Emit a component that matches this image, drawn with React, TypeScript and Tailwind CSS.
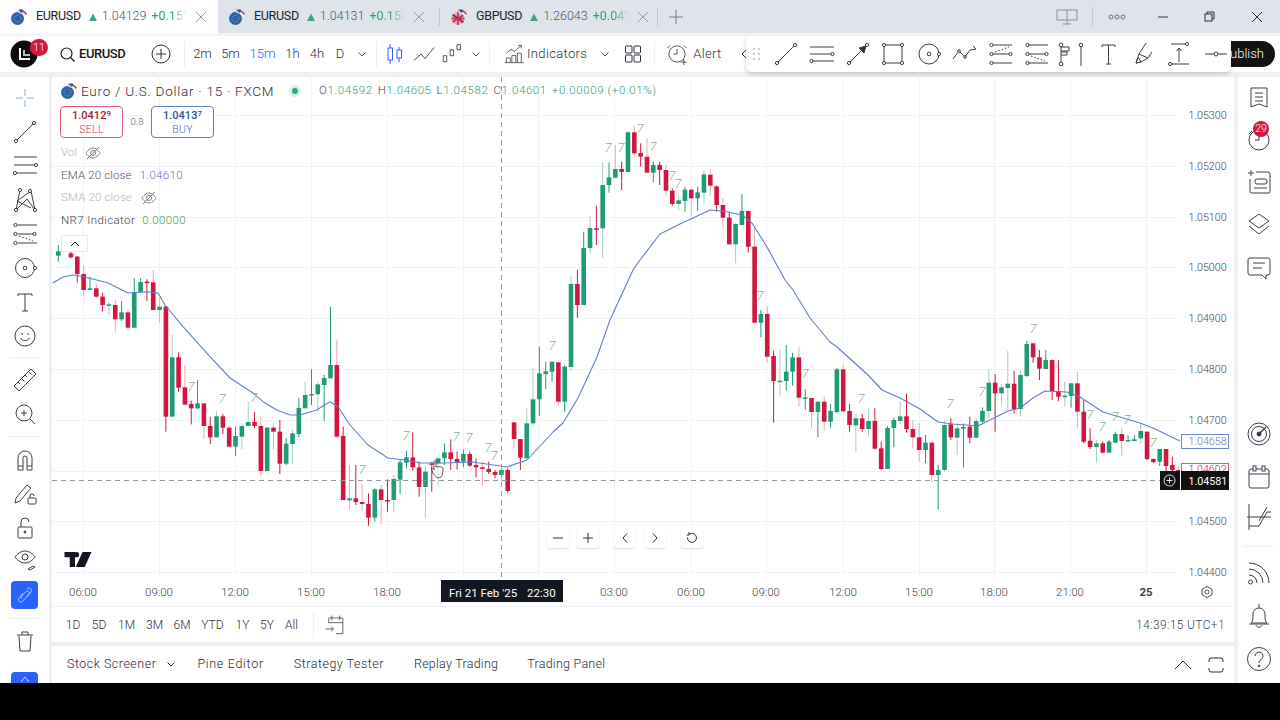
import React from "react";

type C = [number, number, number, number, number, number?] | null;
const G = 1, R = 0;
const zoneA: C[] = [
[G,15,34,47,65],null,[R,30,40,52,55],[R,48,50,102,128],[R,77,102,150,170,1],[G,110,145,150,150],[R,130,145,170,175,1],[R,158,170,195,215],[G,186,193,196,225,1],[R,180,195,238,275,1],
[G,183,217,238,243],[R,210,217,263,270,1],[G,115,156,263,263],[G,115,126,156,160],[R,118,125,128,183],[R,90,127,210,212,1],[G,175,200,210,248,1],[R,198,200,530,575],[G,285,352,530,530,1],[R,337,352,443,455],
[R,375,442,494,496,1],[R,482,492,505,553],[G,420,490,505,508],[R,490,490,558,597,1],[R,530,558,592,612],[G,513,529,592,592,1],[R,522,529,563,582],[R,556,563,620,624,1],[G,560,588,620,648],[G,550,558,590,627,1],
[G,485,546,558,558,1],[R,516,546,558,565],[R,530,558,693,707,1],[G,562,563,693,693],[R,550,563,575,627,1],[R,540,575,671,702],[G,595,611,671,675],[G,570,580,612,673,1],[G,473,504,582,592],[G,425,465,505,505,1],
[G,388,462,466,495],[G,425,433,463,515,1],[G,405,414,435,543],[G,200,375,415,415],[R,298,375,590,595,1],
];
const zoneB: C[] = [
[R,920,948,1140,1140],[G,1035,1135,1141,1168,1],[R,1035,1135,1146,1155],[R,1092,1146,1152,1172,1],[R,1120,1152,1193,1217],[G,1105,1108,1193,1205],[R,1095,1108,1140,1213,1],[R,1078,1140,1141,1175],[G,1065,1077,1140,1178,1],[G,1020,1027,1079,1122],
[G,992,1012,1028,1045],[R,937,1012,1042,1052],[R,1025,1042,1101,1130],[G,1040,1055,1101,1195,1],[R,1025,1030,1032,1115],[G,1012,1015,1030,1100,1],[G,970,997,1015,1035],[R,958,997,1017,1050],[R,995,1017,1027,1048],[G,988,1002,1025,1042],
[R,995,1002,1037,1040],[R,1015,1035,1042,1072],[R,1025,1042,1047,1097,1],[R,1025,1047,1056,1062],[R,1050,1056,1065,1075],[G,1045,1050,1065,1085,1],[R,1045,1050,1113,1118],[R,907,907,957,985,1],[R,957,957,1013,1050],[G,865,910,1015,1020,1],
[G,745,838,910,915,1],[G,680,760,838,888],[G,725,754,762,808],[G,725,725,755,785],[R,727,727,845,857,1],[G,735,740,845,875],[G,468,492,741,753,1],[R,450,492,555,593],[G,335,384,555,555],[G,288,324,384,402,1],
[R,257,325,327,375],[G,128,195,325,412,1],[G,127,172,195,218],[G,75,147,173,175,1],[R,125,147,156,210],[G,35,37,156,156],[R,17,37,100,110,1],[R,70,99,110,140],[R,55,110,158,160,1],[G,125,135,158,187],[R,125,135,150,195],
];
const zoneC: C[] = [
[R,133,150,212,230,1],[R,205,212,252,257],[G,225,241,252,270,1],[G,202,209,243,275],[R,208,209,235,290,1],[G,200,217,235,272],[G,150,163,218,252,1],[R,148,164,197,225,1],[R,197,199,255,275],[R,235,255,293,323,1],
[R,275,293,373,373],[G,310,312,373,430,1],[G,222,273,315,315],[R,272,273,380,398],[R,320,380,608,610,1],[G,570,582,608,652],[R,560,582,710,727,1],[R,692,708,783,908],[G,690,782,785,827,1],[G,675,755,783,812],
[G,698,712,755,797],[R,682,712,833,860,1],[G,808,832,835,870],[R,833,834,876,922,1],[G,845,845,876,952],[R,830,845,905,930,1],[G,852,873,905,923],[G,745,748,876,880],[R,735,748,874,878,1],[R,852,873,915,935],
[G,880,895,916,998,1],[R,882,895,927,935],[G,865,903,927,947,1],[R,865,903,986,988],[R,965,985,1047,1050],[G,918,924,1047,1047],[G,893,900,924,982],[G,845,889,903,912,1],[R,820,889,927,938],[R,900,927,952,985,1],[R,910,952,990,1025,1],
];
const zoneD: C[] = [
[G,405,428,450,490],[R,423,428,525,545,1],[G,495,510,525,628],[G,362,375,510,515,1],[R,355,373,412,420],[G,370,385,413,465,1],[G,370,381,386,503],[R,350,380,413,430],[G,355,363,413,415,1],[G,322,333,365,370],
[G,208,248,333,355,1],[R,222,248,280,395],[G,252,262,280,315,1],[G,152,251,264,330,1],[R,213,251,328,340],[G,210,225,327,350,1],[G,122,132,228,230],[R,130,130,172,188],[R,150,172,206,240],[G,150,180,207,207],
[R,178,180,273,300],[R,180,273,290,303],[G,245,287,290,320,1],[G,250,250,288,323],[R,215,250,335,385,1],[R,300,335,425,430],[R,385,422,441,447],[G,420,430,441,488,1],[R,425,430,458,460],[G,420,425,458,458],
[G,395,402,428,428],[R,383,402,423,470,1],[G,405,420,423,423],[G,405,418,423,423],[G,370,393,415,430,1],[R,395,395,477,480],[R,475,477,486,490],[G,447,447,485,498],[R,447,447,498,515],[R,470,495,510,520],[R,498,510,520,525,1],
];
const candles: { x: number; c: number; wt: number; bt: number; bb: number; wb: number; pale: boolean }[] = [];
let slot = 0;
([[zoneA, 240], [zoneB, 120], [zoneC, 120], [zoneD, 300]] as [C[], number][]).forEach(([z, y0]) => {
  z.forEach((d) => {
    const i = slot++;
    if (!d) return;
    candles.push({ x: 58.3 + i * 6.33, c: d[0], wt: y0 + d[1] / 3, bt: y0 + d[2] / 3, bb: y0 + d[3] / 3, wb: y0 + d[4] / 3, pale: !!d[5] });
  });
});

const ema = "52.7,283 63,277 73,275 83,276.7 96.7,280 108,283 128,293 146.7,291.7 158,293 165,305 183,326.7 210,356.7 230,378 253,393 263,401.7 276.7,410 290,415 300,415 316.7,410 330,401.7 338,406.7 350,425 368,445 388,458 405,460 420,463 443,463 473,462 507,467 527,460 553,432 563,423 578,398 597,357 610,320 633,270 640,260 660,234 680,224 693,218 710,210 723,211 742,215 752,223 767,247 785,280 793,290 810,318 830,342 837,347 868,375 882,390 900,398 920,409 938,422 953,424 978,426 1008,411 1020,408 1033,398 1045,391 1067,392 1080,397 1103,412 1140,423 1153,428 1180,441";
const sevens = [[191,386],[222,398],[254,397],[362,469],[406,435],[456,436],[469,437],[488,447],[494,455],[552,345],[608,147],[621,147],[640,128],[653,146],[672,175],[678,183],[760,295],[805,373],[861,398],[950,403],[982,391],[1033,328],[1090,414],[1102,426],[1115,416],[1127,419],[1153,442]];
const vgrid = [83,159,235,311,387,463,538,614,691,766,843,919,994,1070,1146];
const hgrid: [number, string][] = [[115,"1.05300"],[166,"1.05200"],[217,"1.05100"],[267,"1.05000"],[318,"1.04900"],[369,"1.04800"],[420,"1.04700"],[521,"1.04500"],[572,"1.04400"]];
const times: [number, string][] = [[83,"06:00"],[159,"09:00"],[235,"12:00"],[311,"15:00"],[387,"18:00"],[614,"03:00"],[691,"06:00"],[766,"09:00"],[843,"12:00"],[919,"15:00"],[994,"18:00"],[1070,"21:00"]];

function Ic({ s = 28, className = "", children }: { s?: number; className?: string; children: React.ReactNode }) {
  return <svg width={s} height={s} viewBox="0 0 28 28" fill="none" stroke="#3a3e48" strokeWidth="1" className={className}>{children}</svg>;
}
const Nd = ({ x, y, r = 1.6 }: { x: number; y: number; r?: number }) => <circle cx={x} cy={y} r={r} fill="#fff" />;

function Flag({ gb }: { gb?: boolean }) {
  return (
    <svg width="18" height="18" viewBox="0 0 18 18" className="shrink-0">
      {gb ? (
        <>
          <circle cx="8" cy="10.5" r="6.5" fill="#e3a9ae" />
          <path d="M2.5 7l11 7M13.5 7l-11 7M8 4v13M1.5 10.5h13" stroke="#c8324a" strokeWidth="1.6" />
          <path d="M3 6.5l4 3M13 14.5l-4-3" stroke="#33478f" strokeWidth="1.4" />
        </>
      ) : (
        <>
          <circle cx="7.5" cy="10.5" r="6.5" fill="#2f61a8" />
          <circle cx="7.5" cy="10.5" r="3.4" fill="none" stroke="#7ea3d8" strokeWidth="1" strokeDasharray="1 1" />
        </>
      )}
      <path d="M8 3.5a7 7 0 0 1 7 3.5l2-1A9 9 0 0 0 9 1.5z" fill="#d1394f" />
      <path d="M9 5a6 6 0 0 1 5 3l2-.6A7.5 7.5 0 0 0 8 3.3z" fill="#f3f3f3" />
      <circle cx="11.5" cy="3" r="1.8" fill="#3b5aa5" />
    </svg>
  );
}

function Tab({ sym, price, chg, active, gb, w }: { sym: string; price: string; chg: string; active?: boolean; gb?: boolean; w: string }) {
  return (
    <div className={`flex items-center h-full pl-[10px] ${w} ${active ? "bg-white" : ""}`}>
      <Flag gb={gb} />
      <span className="ml-[8px] text-[12.5px] text-[#1e222d] tracking-[-0.3px]">{sym}</span>
      <svg width="8" height="8" viewBox="0 0 8 8" className="ml-[8px]"><path d="M4 0.5L8 8H0z" fill="#3aa586" /></svg>
      <span className="ml-[5px] text-[12.5px] text-[#50535e] font-light">{price}</span>
      <span className="ml-[5px] w-[36px] overflow-hidden whitespace-nowrap text-[12.5px] text-[#26a17b] [mask-image:linear-gradient(90deg,#000_55%,transparent)]">{chg}</span>
      <svg width="12" height="12" viewBox="0 0 12 12" className="ml-[8px]" stroke="#9598a1" strokeWidth="1"><path d="M1 1l10 10M11 1L1 11" /></svg>
    </div>
  );
}

const V = () => <div className="w-px h-[26px] bg-[#eceef2] shrink-0" />;
const Chev = ({ c = "#50535e", className = "" }: { c?: string; className?: string }) => (
  <svg width="8" height="5" viewBox="0 0 8 5" fill="none" stroke={c} strokeWidth="1" className={className}><path d="M0.5 0.5L4 4l3.5-3.5" /></svg>
);

const TF = ({ t, w, blue }: { t: string; w: string; blue?: boolean }) => (
  <span className={`${w} text-center text-[13px] font-light ${blue ? "text-[#2962ff]" : "text-[#2a2e39]"}`}>{t}</span>
);

function DrawBar() {
  return (
    <div className="absolute left-[746px] top-[36px] w-[485px] h-[36px] bg-white rounded-b-md shadow-[0_2px_4px_rgba(0,0,0,0.18)] flex items-center">
      <svg width="10" height="14" viewBox="0 0 10 14" fill="#c8cad0" className="ml-[6px]">
        <rect x="1" y="1" width="2" height="2" /><rect x="6" y="1" width="2" height="2" /><rect x="1" y="6" width="2" height="2" /><rect x="6" y="6" width="2" height="2" /><rect x="1" y="11" width="2" height="2" /><rect x="6" y="11" width="2" height="2" />
      </svg>
      <div className="ml-[10px] flex items-center gap-[7.8px]">
        <Ic><path d="M6 22L22 6" /><Nd x={5} y={23} /><Nd x={23} y={5} /></Ic>
        <Ic><path d="M2 7h24M2 14h21M5 21h21" /><Nd x={24.5} y={14} /><Nd x={3.5} y={21} /></Ic>
        <Ic><path d="M6 22L22 6" /><path d="M22 6l-7 2 5 5z" fill="#2a2e39" /><Nd x={5} y={23} /><Nd x={23} y={5} /></Ic>
        <Ic><rect x="5" y="5" width="18" height="18" /><Nd x={5} y={5} /><Nd x={23} y={5} /><Nd x={5} y={23} /><Nd x={23} y={23} /></Ic>
        <Ic><circle cx="14" cy="14" r="10" /><circle cx="14" cy="14" r="1.8" /><Nd x={24} y={14} /></Ic>
        <Ic><path d="M2 19l6-8 6 6 5-7 6-1" /><Nd x={8} y={11} r={1.3} /><Nd x={14} y={17} r={1.3} /><path d="M22 6l3 3" /></Ic>
        <Ic><path d="M6 5h19M6 14h17M6 23h19" /><path d="M8 12l14-5" strokeDasharray="1.5 2" /><Nd x={4.5} y={5} /><Nd x={4.5} y={14} /><Nd x={4.5} y={23} /><Nd x={23.5} y={14} /></Ic>
        <Ic><path d="M6 5h19M6 14h17M6 23h19" /><path d="M8 16l14 5" strokeDasharray="1.5 2" /><Nd x={4.5} y={5} /><Nd x={4.5} y={14} /><Nd x={4.5} y={23} /><Nd x={23.5} y={14} /></Ic>
        <div className="flex items-center w-[28px] -ml-[2px] mr-[2px]">
          <svg width="18" height="28" viewBox="0 0 18 28" fill="none" stroke="#3a3e48" className="shrink-0"><path d="M5 5v18M5 7h8v4H5M5 12h6v3H5" /><Nd x={5} y={5} r={1.8} /><Nd x={5} y={24} r={1.8} /></svg>
          <svg width="14" height="28" viewBox="0 0 14 28" fill="none" stroke="#3a3e48" className="shrink-0"><path d="M7 6v20" /><Nd x={7} y={5} r={1.8} /></svg>
        </div>
        <Ic><path d="M8 5h13M14.5 5v19M12 24h5M8 5v2M21 5v2" /></Ic>
        <Ic><path d="M16 3L9 14l9 4 4-6M9 14l-3 9 5-1 7-4" /><path d="M6 23l5-1-3-5z" /></Ic>
        <Ic><path d="M5 4h15M5 24h18M13 22V8M10.5 11L13 8l2.500 3" /><Nd x={21} y={4} /><Nd x={4} y={24} /></Ic>
        <Ic><path d="M3 14h22" /><Nd x={14} y={14} r={2} /></Ic>
      </div>
    </div>
  );
}

const LeftBtn = ({ children }: { children: React.ReactNode }) => <div className="h-[34px] shrink-0 flex items-center justify-center">{children}</div>;
const LDiv = () => <div className="w-[32px] h-px bg-[#eceef2] mx-auto" />;

function LeftBar() {
  return (
    <div className="w-[49px] bg-white shrink-0 flex flex-col pt-[4px] overflow-hidden">
      <LeftBtn><Ic><path d="M14 5v7M14 16v7M5 14h7M16 14h7" stroke="#8aa5da" /></Ic></LeftBtn>
      <LeftBtn><Ic><path d="M6 22L22 6" /><Nd x={5} y={23} /><Nd x={23} y={5} /></Ic></LeftBtn>
      <LeftBtn><Ic><path d="M3 5h23M3 13h21M6 21h20" /><Nd x={25} y={13} /><Nd x={4} y={21} /></Ic></LeftBtn>
      <LeftBtn><Ic><path d="M9 4l-4 20 11-11 8 11-4-19-14 10 14 7" /><Nd x={9} y={4} /><Nd x={5} y={24} /><Nd x={24} y={24} /><Nd x={19} y={5} /></Ic></LeftBtn>
      <LeftBtn><Ic><path d="M7 5h19M7 14h17M7 23h19" /><path d="M8 16l14 5" strokeDasharray="1.5 2" /><Nd x={4.5} y={5} /><Nd x={4.5} y={14} /><Nd x={4.5} y={23} /><Nd x={23.5} y={14} /></Ic></LeftBtn>
      <LeftBtn><Ic><circle cx="14" cy="14" r="9.5" /><circle cx="14" cy="14" r="1.8" /><Nd x={24} y={14} /></Ic></LeftBtn>
      <LeftBtn><Ic><path d="M7 6h14M14 6v17M11 23h6M7 6v2M21 6v2" /></Ic></LeftBtn>
      <LeftBtn><Ic><circle cx="14" cy="14" r="10" /><path d="M9.5 16c2 3.5 7 3.5 9 0" /><path d="M11 11v2M17 11v2" /></Ic></LeftBtn>
      <div className="h-[5px] shrink-0 flex items-end"><LDiv /></div>
      <div className="h-[5px] shrink-0" />
      <LeftBtn><Ic><path d="M3 20L20 3l5 5L8 25z" /><path d="M7 16l2 2M10.5 12.5l3 3M14 9l2 2M17.5 5.5l3 3" /></Ic></LeftBtn>
      <LeftBtn><Ic><circle cx="13" cy="13" r="8" /><path d="M19 19l5 5M13 10v6M10 13h6" /></Ic></LeftBtn>
      <div className="h-[6px] shrink-0 flex items-end"><LDiv /></div>
      <div className="h-[6px] shrink-0" />
      <LeftBtn><Ic><path d="M7 24v-12a7 7 0 0 1 14 0v12h-5V12a2 2 0 0 0-4 0v12zM7 20h5M16 20h5" /></Ic></LeftBtn>
      <LeftBtn><Ic><path d="M5 18L16 5l4 3L9 21l-5 2z" /><rect x="17" y="18" width="8" height="6" rx="1" /><path d="M19 18v-2a2 2 0 0 1 4 0" /></Ic></LeftBtn>
      <LeftBtn><Ic><rect x="7" y="13" width="14" height="11" rx="1" /><path d="M10 13V8a4 4 0 0 1 8 0" /><circle cx="14" cy="18" r="1" fill="#2a2e39" /></Ic></LeftBtn>
      <div className="h-[30px] shrink-0 flex items-center justify-center"><Ic><path d="M4 11s4-6 10-6 10 6 10 6-4 6-10 6-10-6-10-6z" /><circle cx="14" cy="11" r="3" /><path d="M17 23l5-3 2 1-5 3z" /></Ic></div>
      <div className="mx-auto mt-[6px] w-[27px] h-[28px] shrink-0 rounded-[4px] bg-[#2962ff] flex items-center justify-center">
        <svg width="20" height="20" viewBox="0 0 20 20" fill="none" stroke="#a9c3ff" strokeWidth="1"><path d="M8 8l-4 5a2.5 2.5 0 0 0 4 3l6-7a2 2 0 0 0-3-2.5L6 12a1 1 0 0 0 1.5 1.2M12 12l4-5a2.5 2.5 0 0 0-4-3" /></svg>
      </div>
      <div className="h-[10px] shrink-0 flex items-end"><LDiv /></div>
      <div className="h-[5px] shrink-0" />
      <LeftBtn><Ic><path d="M8 9l1 15h10l1-15M6 8h16M11 8V5h6v3" /></Ic></LeftBtn>
      <div className="mx-auto mt-[14px] w-[27px] h-[20px] shrink-0 rounded-t-[4px] bg-[#2962ff] flex justify-center">
        <svg width="12" height="8" viewBox="0 0 12 8" fill="none" stroke="#cfdcff" strokeWidth="1" className="mt-[3px]"><path d="M2 7l4-5 4 5" /></svg>
      </div>
    </div>
  );
}

function RightBar() {
  return (
    <div className="w-[42px] bg-white shrink-0 flex flex-col items-center">
      <div className="mt-[7px] h-[28px]"><Ic><path d="M6 4h16v19l-8-3-8 3zM10 9h8M10 13h8M10 17h8" /></Ic></div>
      <div className="mt-[13px] h-[28px] relative">
        <Ic><path d="M7 6L4 9" /><circle cx="14" cy="15" r="10" /><path d="M14 9v6h-4" /></Ic>
        <span className="absolute left-[8px] -top-[4px] w-[16px] h-[16px] rounded-full bg-[#d9163e] text-white text-[10.5px] leading-[16px] text-center font-light">29</span>
      </div>
      <div className="mt-[15px] h-[28px]"><Ic><path d="M3 5h6M6 2v6" /><path d="M11 4h12a2 2 0 0 1 2 2v18a1 1 0 0 1-1 1H7a2 2 0 0 1-2-2V11" /><rect x="10" y="11" width="12" height="5" rx="2" /><path d="M9 20h13" /></Ic></div>
      <div className="mt-[14px] h-[28px]"><Ic><path d="M14 4l10 7-10 7-10-7z" /><path d="M4 16l10 8 10-8" /></Ic></div>
      <div className="mt-[16px] h-[28px]"><Ic><path d="M5 4h18a2 2 0 0 1 2 2v13a2 2 0 0 1-2 2h-2v4l-4-4H5a2 2 0 0 1-2-2V6a2 2 0 0 1 2-2zM8 9h12M8 14h9" /></Ic></div>
      <div className="mt-[138px] h-[28px]"><Ic><circle cx="14" cy="14" r="11" /><circle cx="14" cy="14" r="7.5" /><circle cx="14" cy="14" r="2" fill="#2a2e39" /><path d="M14 14l7-7" strokeWidth="1.5" /></Ic></div>
      <div className="mt-[15px] h-[28px]"><Ic><rect x="4" y="6" width="20" height="19" rx="2" /><path d="M4 11h20" /><rect x="8" y="3" width="3" height="5" fill="#fff" /><rect x="17" y="3" width="3" height="5" fill="#fff" /></Ic></div>
      <div className="mt-[12px] h-[28px]"><Ic><path d="M4 1v26M4 23h10l8-14h4M2 14h24M22 4l-8 14" /></Ic></div>
      <div className="mt-[15px] w-[32px] h-px bg-[#eceef2]" />
      <div className="mt-[12px] h-[28px]"><Ic><path d="M4 4a20 20 0 0 1 20 20M4 10a14 14 0 0 1 14 14M4 16a8 8 0 0 1 8 8" /><circle cx="5.5" cy="23" r="2" /></Ic></div>
      <div className="mt-[15px] h-[28px]"><Ic><path d="M6 21c2-2 2-4 2-9a6 6 0 0 1 12 0c0 5 0 7 2 9zM4 22h20M14 2v4M11 23c1 3 5 3 6 0" /></Ic></div>
      <div className="mt-[15px] h-[28px]"><Ic><circle cx="14" cy="14" r="11.5" /><path d="M10 11a4 4 0 1 1 6 3.5c-1.5 1-2 1.5-2 3.5" /><circle cx="14" cy="21" r="0.8" fill="#2a2e39" /></Ic></div>
    </div>
  );
}

function Chart() {
  return (
    <svg width="1182" height="530" viewBox="52 77 1182 530" className="block absolute inset-0" style={{ fontFamily: "Roboto, sans-serif" }}>
      <defs><clipPath id="plot"><rect x="52" y="77" width="1128" height="503" /></clipPath></defs>
      <g stroke="#f1f2f5" strokeWidth="1">
        {vgrid.map((x) => <line key={x} x1={x + 0.5} x2={x + 0.5} y1="77" y2="578" />)}
        {hgrid.map(([y]) => <line key={y} x1="52" x2="1180" y1={y + 0.5} y2={y + 0.5} />)}
        <line x1="52" x2="1180" y1="471.5" y2="471.5" />
        <line x1="52" x2="1234" y1="606.5" y2="606.5" />
      </g>
      <g clipPath="url(#plot)">
        {candles.map((c, i) => {
          const col = c.c ? "#1f9c76" : "#d3163f";
          const pale = c.c ? "#a6cdbf" : "#eda5b4";
          return (
            <g key={i}>
              <line x1={c.x} x2={c.x} y1={c.wt} y2={c.wb} stroke={c.pale ? pale : col} strokeWidth="1" />
              <rect x={c.x - 2.3} width="4.6" y={c.bt} height={Math.max(1.5, c.bb - c.bt)} fill={col} />
            </g>
          );
        })}
        <polyline points={ema} fill="none" stroke="#5f80c6" strokeWidth="1.1" strokeLinejoin="round" />
        {sevens.map(([x, y], i) => (
          <text key={i} x={x} y={y + 5} textAnchor="middle" fontSize="13" fontStyle="italic" fontWeight="300" fill="#7fb388">7</text>
        ))}
      </g>
      <line x1="501.5" x2="501.5" y1="77" y2="580" stroke="#9598a1" strokeDasharray="5 4" />
      <line x1="52" x2="1160" y1="480.5" y2="480.5" stroke="#9598a1" strokeDasharray="5 4" />
      <g fontSize="10.7" fill="#3f434d" fontWeight="300" textAnchor="start">
        {hgrid.map(([y, t]) => <text key={y} x="1188.5" y={y + 4}>{t}</text>)}
      </g>
      <rect x="1181.5" y="434.5" width="47" height="14" fill="#fff" stroke="#6b87dc" />
      <text x="1188.5" y="445" fontSize="10.7" fill="#5a76c8" fontWeight="300">1.04658</text>
      <rect x="1181.5" y="463.5" width="47" height="12" fill="#fff" stroke="#e3556f" />
      <text x="1188.5" y="473" fontSize="10.7" fill="#d3163f" fontWeight="300">1.04602</text>
      <rect x="1160" y="471" width="20" height="19" fill="#111" />
      <circle cx="1169.5" cy="480.5" r="5.5" fill="none" stroke="#e8e8e8" />
      <path d="M1169.5 477.5v6M1166.5 480.5h6" stroke="#e8e8e8" />
      <rect x="1181" y="471" width="48" height="19" fill="#111" />
      <text x="1188.5" y="484.5" fontSize="10.7" fill="#fff">1.04581</text>
      <g fontSize="11.5" fill="#3f434d" textAnchor="middle" fontWeight="300">
        {times.map(([x, t]) => <text key={x} x={x} y="596">{t}</text>)}
        <text x="1146" y="596" fontWeight="700">25</text>
      </g>
      <rect x="441" y="580" width="122" height="22" fill="#131722" />
      <text x="449" y="596.5" fontSize="11.5" fill="#fff">Fri 21 Feb '25</text>
      <text x="527" y="596.5" fontSize="11.5" fill="#fff">22:30</text>
      <path d="M1207 586.5l5 2.8v5.4l-5 2.8-5-2.8v-5.4z" fill="none" stroke="#50535e" />
      <circle cx="1207" cy="592" r="2" fill="none" stroke="#50535e" />
      <path d="M433 473c-1-3-2-4-2-5 1-1 2 0 3 2v-8c0-2 2-2 2 0v5c3-1 6 0 7 1 0 3 0 7-2 9-3 2-6 0-8-4z" fill="#fff" fillOpacity="0.5" stroke="#333" strokeWidth="0.8" />
    </svg>
  );
}

function CtlBtn({ children, className = "" }: { children: React.ReactNode; className?: string }) {
  return <div className={`w-[22px] h-[20px] rounded-[3px] bg-white shadow-[0_1px_2px_rgba(0,0,0,0.12)] flex items-center justify-center ${className}`}>{children}</div>;
}

function SellBuy({ price, sup, label, red }: { price: string; sup: string; label: string; red?: boolean }) {
  return (
    <div className={`w-[63px] h-[32px] rounded-[4px] border flex flex-col items-center justify-center bg-white ${red ? "border-[#de5a76]" : "border-[#5f80cf]"}`}>
      <span className={`text-[11px] leading-[14px] font-medium ${red ? "text-[#a51639]" : "text-[#2f4fa0]"}`}>{price}<sup className="text-[8px] top-[-3px]">{sup}</sup></span>
      <span className={`text-[10.5px] leading-[13px] tracking-[0.3px] font-light ${red ? "text-[#c9365a]" : "text-[#3f63bd]"}`}>{label}</span>
    </div>
  );
}

const EyeOff = () => (
  <svg width="18" height="14" viewBox="0 0 18 14" fill="none" stroke="#7a7d86" strokeWidth="1"><path d="M2 7s3-5 7-5 7 5 7 5-3 5-7 5-7-5-7-5z" /><circle cx="9" cy="7" r="2.5" /><path d="M3 13L15 1" /></svg>
);

const O = ({ l, v }: { l: string; v: string }) => <span className="text-[#3f434d] font-light mr-[5px]">{l}<span className="text-[#2f9c78]">{v}</span></span>;

function Legend() {
  return (
    <div className="absolute left-[8px] top-[5px] flex flex-col items-start">
      <div className="flex items-center h-[18px]">
        <Flag />
        <span className="ml-[3px] w-[192px] whitespace-nowrap text-[13.5px] text-[#2a2e39] font-light tracking-[0.75px]">Euro / U.S. Dollar · 15 · FXCM</span>
        <div className="ml-[16px] w-[12px] h-[12px] rounded-full bg-[#d6f0e6] flex items-center justify-center"><div className="w-[6px] h-[6px] rounded-full bg-[#22ab94]" /></div>
        <div className="ml-[18px] whitespace-nowrap text-[11.5px] tracking-[0.6px]"><O l="O" v="1.04592" /><O l="H" v="1.04605" /><O l="L" v="1.04582" /><O l="C" v="1.04601" /><span className="text-[#2f9c78] font-light">+0.00009 (+0.01%)</span></div>
      </div>
      <div className="flex items-center mt-[6px] gap-[7px]">
        <SellBuy price="1.0412" sup="9" label="SELL" red />
        <span className="text-[9.5px] text-[#50535e] font-light w-[14px] text-center">0.8</span>
        <SellBuy price="1.0413" sup="7" label="BUY" />
      </div>
      <div className="flex items-center mt-[7px] h-[16px] text-[11.5px] text-[#b2b5be] font-light pl-px">Vol<span className="ml-[7px]"><EyeOff /></span></div>
      <div className="flex items-center mt-[7px] h-[16px] text-[11.5px] text-[#50535e] font-light pl-px tracking-[0.15px]">EMA 20 close<span className="ml-[8px] text-[#5a76c0] tracking-[0.3px]">1.04610</span></div>
      <div className="flex items-center mt-[6px] h-[16px] text-[11.5px] text-[#b2b5be] font-light pl-px tracking-[0.15px]">SMA 20 close<span className="ml-[8px]"><EyeOff /></span></div>
      <div className="flex items-center mt-[7px] h-[16px] text-[11.5px] text-[#3f434d] font-light pl-px tracking-[0.4px]">NR7 Indicator<span className="ml-[7px] text-[#3f9a4e]">0.00000</span></div>
      <div className="mt-[6px] ml-px w-[27px] h-[17px] border border-[#e6e8ec] rounded-[2px] bg-white flex items-center justify-center">
        <svg width="10" height="6" viewBox="0 0 10 6" fill="none" stroke="#131722" strokeWidth="1"><path d="M1 5l4-4 4 4" /></svg>
      </div>
    </div>
  );
}

const Rng = ({ t, w }: { t: string; w: string }) => <span className={`${w} text-center text-[12px] font-light text-[#2a2e39]`}>{t}</span>;
const Bt = ({ t, c }: { t: string; c: string }) => <span className={`${c} text-[12.5px] text-[#2a2e39] font-light whitespace-nowrap`}>{t}</span>;

export default function App() {
  return (
    <div className="relative w-[1280px] h-[720px] overflow-hidden bg-[#eef0f3] flex flex-col" style={{ fontFamily: "Roboto, sans-serif" }}>
      {/* tabs */}
      <div className="h-[33px] shrink-0 bg-[#dfe3ea] flex items-center">
        <Tab sym="EURUSD" price="1.04129" chg="+0.15%" active w="w-[218px]" />
        <Tab sym="EURUSD" price="1.04131" chg="+0.15%" w="w-[221px]" />
        <div className="w-px h-[18px] bg-[#c5c9d2]" />
        <Tab sym="GBPUSD" price="1.26043" chg="+0.04%" gb w="w-[217px]" />
        <div className="w-px h-[18px] bg-[#c5c9d2]" />
        <svg width="14" height="14" viewBox="0 0 14 14" stroke="#7a7d86" className="ml-[11px]"><path d="M7 0v14M0 7h14" /></svg>
        <svg width="22" height="18" viewBox="0 0 22 18" fill="none" stroke="#8a8d96" className="ml-[373px]"><rect x="1" y="2" width="20" height="10" /><path d="M11 2v14M7 16h8" /></svg>
        <div className="ml-[14px] w-px h-[20px] bg-[#c5c9d2]" />
        <svg width="18" height="6" viewBox="0 0 18 6" fill="none" stroke="#6a6d76" className="ml-[15px]"><circle cx="3" cy="3" r="2" /><circle cx="9" cy="3" r="2" /><circle cx="15" cy="3" r="2" /></svg>
        <svg width="10" height="2" viewBox="0 0 10 2" stroke="#2a2e39" className="ml-[32px]"><path d="M0 1h10" /></svg>
        <svg width="11" height="11" viewBox="0 0 11 11" fill="none" stroke="#2a2e39" className="ml-[36px]"><rect x="1" y="3" width="7" height="7" /><path d="M3 3V1h7v7H8" /></svg>
        <svg width="12" height="12" viewBox="0 0 12 12" stroke="#2a2e39" className="ml-[36px]"><path d="M1 1l10 10M11 1L1 11" /></svg>
      </div>
      <div className="h-[3px] shrink-0 bg-[#f4f5f7]" />
      {/* toolbar */}
      <div className="h-[36px] shrink-0 bg-white flex items-center relative">
        <div className="ml-[10px] relative w-[28px] h-[28px]">
          <svg width="28" height="28" viewBox="0 0 28 28"><circle cx="14" cy="14" r="13.5" fill="#0b0b0b" /><path d="M10 8v11h10" fill="none" stroke="#fff" strokeWidth="2" /><path d="M14 10v5h6" fill="none" stroke="#bbb" strokeWidth="2" /></svg>
          <span className="absolute left-[20px] -top-[1px] w-[18px] h-[17px] rounded-full bg-[#d9163e] text-white text-[11px] leading-[17px] text-center font-light">11</span>
        </div>
        <svg width="15" height="15" viewBox="0 0 15 15" fill="none" stroke="#131722" strokeWidth="1.2" className="ml-[22px]"><circle cx="6.5" cy="6.5" r="5.5" /><path d="M10.5 10.5l4 4" /></svg>
        <span className="ml-[4px] w-[47px] whitespace-nowrap text-[13px] font-medium text-[#131722] tracking-[-0.45px]">EURUSD</span>
        <svg width="20" height="20" viewBox="0 0 20 20" fill="none" stroke="#2a2e39" className="ml-[25px]"><circle cx="10" cy="10" r="9" /><path d="M10 5v10M5 10h10" /></svg>
        <div className="ml-[13px]"><V /></div>
        <div className="ml-[4px] flex items-center">
          <TF t="2m" w="w-[27px]" /><TF t="5m" w="w-[29px]" /><TF t="15m" w="w-[35px]" blue /><TF t="1h" w="w-[25px]" /><TF t="4h" w="w-[24px]" /><TF t="D" w="w-[22px]" />
        </div>
        <Chev className="ml-[7px]" />
        <div className="ml-[10px]"><V /></div>
        <svg width="20" height="24" viewBox="0 0 20 24" fill="none" stroke="#2962ff" className="ml-[8px]"><rect x="3" y="6" width="4.5" height="12" /><rect x="12" y="8" width="4.5" height="8" /><path d="M5 2v4M5 18v4M14 5v3M14 16v4" /></svg>
        <Ic s={26} className="ml-[6px]"><path d="M3 21l8-7 4 5 10-12" /></Ic>
        <Ic s={24} className="ml-[2px]"><path d="M5 16h4v7H5zM13 9h4v7h-4zM21 3h4v6h-4z" /></Ic>
        <Chev className="ml-[9px]" />
        <div className="ml-[9px]"><V /></div>
        <Ic s={22} className="ml-[14px]"><path d="M3 13l6-5 4 3 9-8M18 3h4v4" /><path d="M3 25v-6h5v6M10 25v-9h5v9M17 25v-12h5v12M1 25h24" /></Ic>
        <span className="ml-[1px] text-[13px] font-light text-[#2a2e39] tracking-[0.35px]">Indicators</span>
        <Chev className="ml-[14px]" />
        <svg width="16" height="18" viewBox="0 0 16 18" fill="none" stroke="#2a2e39" className="ml-[16px]"><rect x="0.5" y="1" width="6.5" height="7" rx="1" /><rect x="9" y="1" width="6.5" height="7" rx="1" /><rect x="0.5" y="10" width="6.5" height="7" rx="1" /><rect x="9" y="10" width="6.5" height="7" rx="1" /></svg>
        <div className="ml-[13px]"><V /></div>
        <Ic s={24} className="ml-[10px]"><path d="M6 4L3 7M22 4l3 3" /><circle cx="14" cy="14" r="9.5" /><path d="M14 8v6h-4" /><path d="M22 20v7M18.5 23.5h7" /></Ic>
        <span className="ml-[4px] text-[13px] font-light text-[#2a2e39] tracking-[0.3px]">Alert</span>
        <svg width="8" height="12" viewBox="0 0 8 12" fill="none" stroke="#2a2e39" className="ml-[19px]"><path d="M7 1L2 6l5 5" /></svg>
        <div className="absolute left-[1218px] top-[5px] w-[57px] h-[26px] rounded-r-[13px] bg-[#131313] text-white text-[13px] leading-[26px] text-right pr-[11px] font-light">Publish</div>
      </div>
      <DrawBar />
      <div className="h-[5px] shrink-0" />
      {/* middle */}
      <div className="flex-1 flex min-h-0">
        <LeftBar />
        <div className="w-[3px] shrink-0" />
        <div className="w-[1182px] shrink-0 flex flex-col">
          <div className="relative h-[530px] bg-white shrink-0">
            <Chart />
            <Legend />
            <svg width="28" height="15" viewBox="0 0 36 20" fill="#131722" className="absolute left-[12px] top-[475px]"><path d="M0 0h14v20H7V7H0zM16 0a3.5 3.5 0 1 1 0 7 3.5 3.5 0 0 1 0-7zM24 0h12l-9 20H15z" /></svg>
            <div className="absolute left-[495px] top-[451px] flex items-center gap-[8px]">
              <CtlBtn><svg width="10" height="2" stroke="#2a2e39"><path d="M0 1h10" /></svg></CtlBtn>
              <CtlBtn><svg width="10" height="10" stroke="#2a2e39"><path d="M0 5h10M5 0v10" /></svg></CtlBtn>
              <CtlBtn className="ml-[7px]"><svg width="6" height="10" fill="none" stroke="#2a2e39"><path d="M5 0.5L1 5l4 4.5" /></svg></CtlBtn>
              <CtlBtn><svg width="6" height="10" fill="none" stroke="#2a2e39"><path d="M1 0.5L5 5 1 9.5" /></svg></CtlBtn>
              <CtlBtn className="ml-[7px]"><svg width="12" height="12" viewBox="0 0 12 12" fill="none" stroke="#2a2e39"><path d="M3 2.5a4.5 4.5 0 1 1-1.5 3M3 0v3H0.5" /></svg></CtlBtn>
            </div>
          </div>
          <div className="h-[35px] shrink-0 bg-white flex items-center">
            <div className="ml-[8px] flex items-center">
              <Rng t="1D" w="w-[26px]" /><Rng t="5D" w="w-[26px]" /><Rng t="1M" w="w-[29px]" /><Rng t="3M" w="w-[27px]" /><Rng t="6M" w="w-[28px]" /><Rng t="YTD" w="w-[33px]" /><Rng t="1Y" w="w-[27px]" /><Rng t="5Y" w="w-[22px]" /><Rng t="All" w="w-[27px]" />
            </div>
            <div className="ml-[8px]"><V /></div>
            <Ic s={22} className="ml-[10px]"><path d="M6 10V6a1 1 0 0 1 1-1h16a1 1 0 0 1 1 1v19h-9M5 11h19M10 2v6M20 2v6M2 19h10M9 16l3 3-3 3" /></Ic>
            <span className="ml-auto mr-[9px] text-[12px] text-[#3f434d] font-light tracking-[0.35px]">14:39:15 UTC+1</span>
          </div>
          <div className="h-[4px] shrink-0" />
          <div className="flex-1 bg-white flex items-center">
            <Bt t="Stock Screener" c="ml-[15px] tracking-[0.5px]" />
            <Chev c="#2a2e39" className="ml-[11px]" />
            <Bt t="Pine Editor" c="ml-[22px] tracking-[0.7px]" />
            <Bt t="Strategy Tester" c="ml-[30px] tracking-[0.5px]" />
            <Bt t="Replay Trading" c="ml-[30px] tracking-[0.25px]" />
            <Bt t="Trading Panel" c="ml-[29px] tracking-[0.25px]" />
            <svg width="18" height="10" viewBox="0 0 18 10" fill="none" stroke="#2a2e39" className="ml-auto mr-[16px]"><path d="M1 9l8-8 8 8" /></svg>
            <svg width="16" height="16" viewBox="0 0 16 16" fill="none" stroke="#2a2e39" className="mr-[10px]"><path d="M1 5V3a2 2 0 0 1 2-2h10a2 2 0 0 1 2 2v2M1 11v2a2 2 0 0 0 2 2h10a2 2 0 0 0 2-2v-2" /></svg>
          </div>
        </div>
        <div className="w-[4px] shrink-0" />
        <RightBar />
      </div>
      <div className="h-[37px] shrink-0 bg-black relative z-10" />
    </div>
  );
}
